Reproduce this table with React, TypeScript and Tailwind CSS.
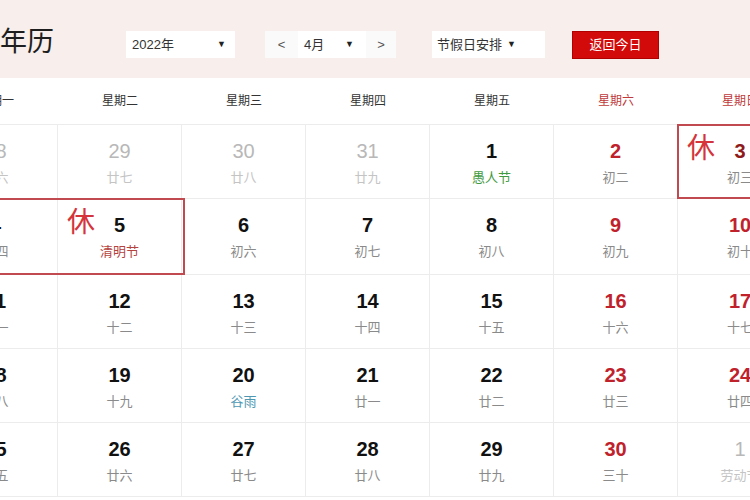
import React from "react";

type Day = { n: number; l: string; kind?: "other" | "red" | "darkred"; lc?: string; rest?: boolean };

const rows: Day[][] = [
  [
    { n: 28, l: "廿六", kind: "other" },
    { n: 29, l: "廿七", kind: "other" },
    { n: 30, l: "廿八", kind: "other" },
    { n: 31, l: "廿九", kind: "other" },
    { n: 1, l: "愚人节", lc: "text-[#3f9a3f]" },
    { n: 2, l: "初二", kind: "red" },
    { n: 3, l: "初三", kind: "darkred", rest: true },
  ],
  [
    { n: 4, l: "初四" },
    { n: 5, l: "清明节", lc: "text-[#b4423f]", rest: true },
    { n: 6, l: "初六" },
    { n: 7, l: "初七" },
    { n: 8, l: "初八" },
    { n: 9, l: "初九", kind: "red" },
    { n: 10, l: "初十", kind: "red" },
  ],
  [
    { n: 11, l: "十一" },
    { n: 12, l: "十二" },
    { n: 13, l: "十三" },
    { n: 14, l: "十四" },
    { n: 15, l: "十五" },
    { n: 16, l: "十六", kind: "red" },
    { n: 17, l: "十七", kind: "red" },
  ],
  [
    { n: 18, l: "十八" },
    { n: 19, l: "十九" },
    { n: 20, l: "谷雨", lc: "text-[#4d97b3]" },
    { n: 21, l: "廿一" },
    { n: 22, l: "廿二" },
    { n: 23, l: "廿三", kind: "red" },
    { n: 24, l: "廿四", kind: "red" },
  ],
  [
    { n: 25, l: "廿五" },
    { n: 26, l: "廿六" },
    { n: 27, l: "廿七" },
    { n: 28, l: "廿八" },
    { n: 29, l: "廿九" },
    { n: 30, l: "三十", kind: "red" },
    { n: 1, l: "劳动节", kind: "other" },
  ],
];

const weekdays = ["星期一", "星期二", "星期三", "星期四", "星期五", "星期六", "星期日"];

function Caret() {
  return <span className="text-[9px] text-[#222] leading-none">▼</span>;
}

export default function App() {
  return (
    <div
      className="w-[750px] h-[500px] overflow-hidden bg-white"
      style={{ fontFamily: '"Liberation Sans", Arial, "Noto Sans CJK SC", sans-serif' }}
    >
      {/* header */}
      <div className="h-[78px] bg-[#f8eeeb] flex items-start pt-[31px]">
        <div className="w-[126px] text-[27px] text-[#1e1e1e] leading-none -mt-[2px] whitespace-nowrap">
          年历
        </div>
        <div className="w-[109px] h-[27px] bg-white flex items-center justify-between pl-[6px] pr-[9px] text-[13px] text-[#333]">
          <span>2022年</span>
          <Caret />
        </div>
        <div className="ml-[30px] h-[27px] flex text-[13px] text-[#333]">
          <div className="w-[33px] bg-[#fbfafa] flex items-center justify-center text-[#555]">&lt;</div>
          <div className="w-[68px] bg-white flex items-center justify-between pl-[6px] pr-[12px]">
            <span>4月</span>
            <Caret />
          </div>
          <div className="w-[30px] bg-[#fbfafa] flex items-center justify-center text-[#555]">&gt;</div>
        </div>
        <div className="ml-[36px] w-[113px] h-[27px] bg-white flex items-center pl-[5px] gap-[5px] text-[13px] text-[#333]">
          <span>节假日安排</span>
          <Caret />
        </div>
        <div className="ml-[27px] w-[87px] h-[28px] bg-[#d20a0a] border border-[#b00000] flex items-center justify-center text-white text-[13px]">
          返回今日
        </div>
      </div>

      {/* grid */}
      <div className="-ml-[66px] w-[868px]">
        <div className="grid grid-cols-7 h-[47px] border-b border-[#ececec]">
          {weekdays.map((w, i) => (
            <div
              key={w}
              className={`flex items-center justify-center text-[12px] ${i >= 5 ? "text-[#c0393b]" : "text-[#333]"}`}
            >
              {w}
            </div>
          ))}
        </div>
        {rows.map((row, ri) => (
          <div key={ri} className={`relative grid grid-cols-7 border-b border-[#ececec] ${ri === 1 ? "h-[76px]" : "h-[74px]"}`}>
            {row.map((d, ci) => {
              const numCls =
                d.kind === "other"
                  ? "text-[#b8b8b8] font-normal"
                  : d.kind === "red"
                  ? "text-[#c0222c] font-bold"
                  : d.kind === "darkred"
                  ? "text-[#8e1b1b] font-bold"
                  : "text-[#111] font-bold";
              const lunCls = d.lc
                ? d.lc
                : d.kind === "other"
                ? "text-[#c4c4c4]"
                : "text-[#8a8a8a]";
              return (
                <div
                  key={ci}
                  className={`relative flex flex-col items-center pt-[14px] ${ci < 6 ? "border-r border-[#ececec]" : ""}`}
                >
                  {d.rest && (
                    <span className="absolute left-[9px] top-[10px] text-[28px] leading-none text-[#d4343a]">休</span>
                  )}
                  <span className={`text-[20px] leading-[24px] ${numCls}`}>{d.n}</span>
                  <span className={`mt-[5px] text-[13px] leading-[20px] ${lunCls}`}>{d.l}</span>
                </div>
              );
            })}
            {ri === 0 && (
              <div className="absolute left-[743px] top-[-1px] w-[130px] h-[75px] border-2 border-[#c04a4f]" />
            )}
            {ri === 1 && (
              <div className="absolute left-[-4px] top-[-1px] w-[255px] h-[77px] border-2 border-[#c04a4f]" />
            )}
          </div>
        ))}
      </div>
    </div>
  );
}
